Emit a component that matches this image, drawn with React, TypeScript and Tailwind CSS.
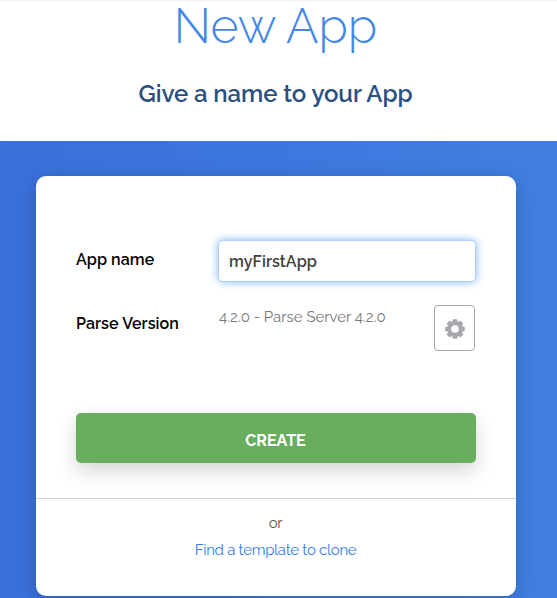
const TOOTH_ANGLES = [0, 45, 90, 135];

function GearIcon() {
  return (
    <svg width="20" height="20" viewBox="0 0 20 20" fill="#a8a9b0" aria-hidden="true">
      {TOOTH_ANGLES.map((angle) => (
        <path
          key={angle}
          transform={`rotate(${angle} 10 10)`}
          d="M7.7 .8Q7.8 .2 8.4 .2H11.6Q12.2 .2 12.3 .8L12.8 3.6V5H7.2V3.6ZM7.7 19.2Q7.8 19.8 8.4 19.8H11.6Q12.2 19.8 12.3 19.2L12.8 16.4V15H7.2V16.4Z"
        />
      ))}
      <path fillRule="evenodd" d="M10 2.3a7.7 7.7 0 1 0 0 15.4a7.7 7.7 0 0 0 0-15.4ZM10 6.2a3.8 3.8 0 1 1 0 7.6a3.8 3.8 0 0 1 0-7.6Z" />
    </svg>
  );
}

export default function App() {
  return (
    <div className="flex h-[598px] w-[557px] flex-col overflow-hidden bg-white font-['Raleway','Lato',sans-serif]">
      <header className="flex h-[141px] shrink-0 flex-col items-center border-t-2 border-[#f6f6f7] pr-[6px]">
        <h1 className="h-[48px] whitespace-nowrap text-[48px] font-light leading-[48px] text-[#4388e7]">New App</h1>
        <h2 className="mt-[29px] whitespace-nowrap text-[24px] font-semibold leading-[29px] tracking-[-0.08px] text-[#2a5080]">Give a name to your App</h2>
      </header>
      <main className="h-[457px] shrink-0 bg-linear-to-r from-[#3a6fda] to-[#407fe1] pl-[36px] pt-[35px]">
        <section className="flex h-[420px] w-[480px] flex-col rounded-[10px] bg-white shadow-[0_5px_20px_rgba(0,0,0,0.2)]">
          <div className="h-[323px] border-b border-[#d2d2d2] px-[40px] pt-[65px]">
            <div className="flex h-[40px] pr-px">
              <label htmlFor="name" className="w-[143px] whitespace-nowrap pt-[9px] text-[16px] font-semibold leading-[20px] tracking-[0.06px] text-black">App name</label>
              <input
                id="name"
                defaultValue="myFirstApp"
                className="h-[40px] w-[256px] rounded-[4px] bg-white px-[10px] text-[16px] font-semibold tracking-[0.08px] text-[#404040] shadow-[0_0_0_1px_#b0d2f8,0_0_8px_1px_#7eb3f2] outline-none"
              />
            </div>
            <div className="mt-[24px] flex h-[46px]">
              <div className="w-[143px] whitespace-nowrap pt-[9px] text-[16px] font-semibold leading-[20px] tracking-[0.08px] text-black">Parse Version</div>
              <div className="w-[215px] whitespace-nowrap pt-[2px] text-[15px] leading-[20px] text-[#777]">4.2.0 - Parse Server 4.2.0</div>
              <button aria-label="Version settings" className="flex h-[46px] w-[41px] items-center justify-center rounded-[4px] border border-[#a5a5ae] pt-[2px]">
                <GearIcon />
              </button>
            </div>
            <button className="mt-[62px] h-[50px] w-[400px] rounded-[5px] bg-[#69ae5e] pr-px pt-[5px] text-[16px] font-bold leading-[20px] text-white shadow-[0_8px_20px_rgba(0,0,0,0.17)]">CREATE</button>
          </div>
          <div className="flex flex-col items-center pr-px pt-[11px] text-[15px] leading-[27px]">
            <span className="tracking-[-0.3px] text-[#555]">or</span>
            <a className="whitespace-nowrap tracking-[-0.3px] text-[#397be8]">Find a template to clone</a>
          </div>
        </section>
      </main>
    </div>
  );
}
